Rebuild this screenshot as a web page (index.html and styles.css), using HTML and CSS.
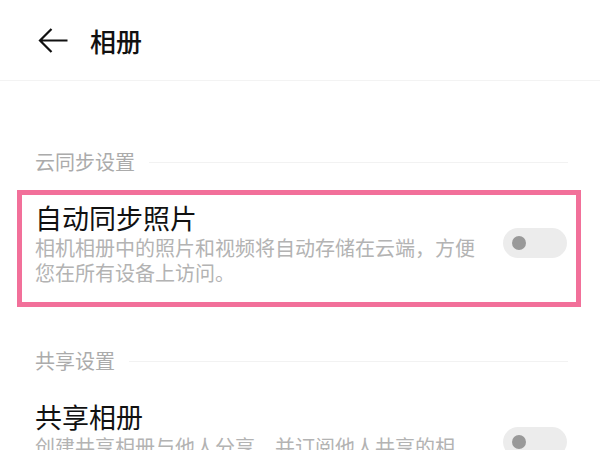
FILE: index.html
```html
<!DOCTYPE html>
<html lang="zh-CN">
<head>
<meta charset="utf-8">
<title>相册</title>
<link rel="stylesheet" href="styles.css">
</head>
<body>
<div class="page">
  <header class="header">
    <svg class="back" width="30" height="26" viewBox="0 0 30 26" aria-hidden="true">
      <path d="M29.5 12.5H2 M13.5 1L2 12.5L13.5 24" fill="none" stroke="#111" stroke-width="2.2" stroke-linecap="butt" stroke-linejoin="miter"/>
    </svg>
    <h1 class="title">相册</h1>
  </header>

  <section class="section first">
    <div class="section-head">
      <span class="section-label">云同步设置</span>
      <span class="section-rule"></span>
    </div>
    <div class="item highlighted">
      <div class="item-text">
        <div class="item-title">自动同步照片</div>
        <div class="item-desc">相机相册中的照片和视频将自动存储在云端，方便您在所有设备上访问。</div>
      </div>
      <div class="toggle"><span class="knob"></span></div>
    </div>
  </section>

  <section class="section second">
    <div class="section-head">
      <span class="section-label">共享设置</span>
      <span class="section-rule"></span>
    </div>
    <div class="item">
      <div class="item-text">
        <div class="item-title">共享相册</div>
        <div class="item-desc">创建共享相册与他人分享，并订阅他人共享的相册，共同记录美好时光。</div>
      </div>
      <div class="toggle"><span class="knob"></span></div>
    </div>
  </section>
</div>
</body>
</html>
```

FILE: styles.css
```css
* { box-sizing: border-box; }

html, body {
  margin: 0;
  padding: 0;
  background: #ffffff;
}

body {
  font-family: "Noto Sans CJK SC", "Noto Sans", sans-serif;
  color: #111111;
  width: 600px;
  height: 450px;
  overflow: hidden;
}

.header {
  height: 81px;
  display: flex;
  align-items: center;
  padding: 2px 0 0 38px;
  border-bottom: 1px solid #f3f3f3;
}

.back {
  display: block;
  flex: none;
}

.title {
  margin: 0 0 0 22px;
  font-size: 26px;
  font-weight: 500;
  line-height: 34px;
  color: #111111;
}

.section.first { margin-top: 69px; }
.section.second { margin-top: 42px; }

.section-head {
  display: flex;
  align-items: center;
  gap: 14px;
  height: 24px;
  padding: 0 32px 0 35px;
}

.section-label {
  font-size: 20px;
  line-height: 24px;
  color: #ababab;
  white-space: nowrap;
}

.section-rule {
  flex: 1;
  height: 1px;
  background: #f2f2f2;
}

.item {
  margin: 16px 19px 0 17px;
  border: 5px solid transparent;
  padding: 6px 9px 17px 13px;
  display: flex;
  align-items: center;
  gap: 20px;
}

.item.highlighted {
  border-color: #f2709a;
}

.item-text {
  flex: 1;
  min-width: 0;
}

.item-title {
  font-size: 27px;
  line-height: 34px;
  color: #111111;
}

.item-desc {
  font-size: 20px;
  line-height: 25px;
  color: #b3b3b3;
}

.toggle {
  flex: none;
  width: 64px;
  height: 30px;
  border-radius: 15px;
  background: #ececec;
  display: flex;
  align-items: center;
  padding-left: 9px;
}

.knob {
  width: 14px;
  height: 14px;
  border-radius: 50%;
  background: #999999;
}
```
